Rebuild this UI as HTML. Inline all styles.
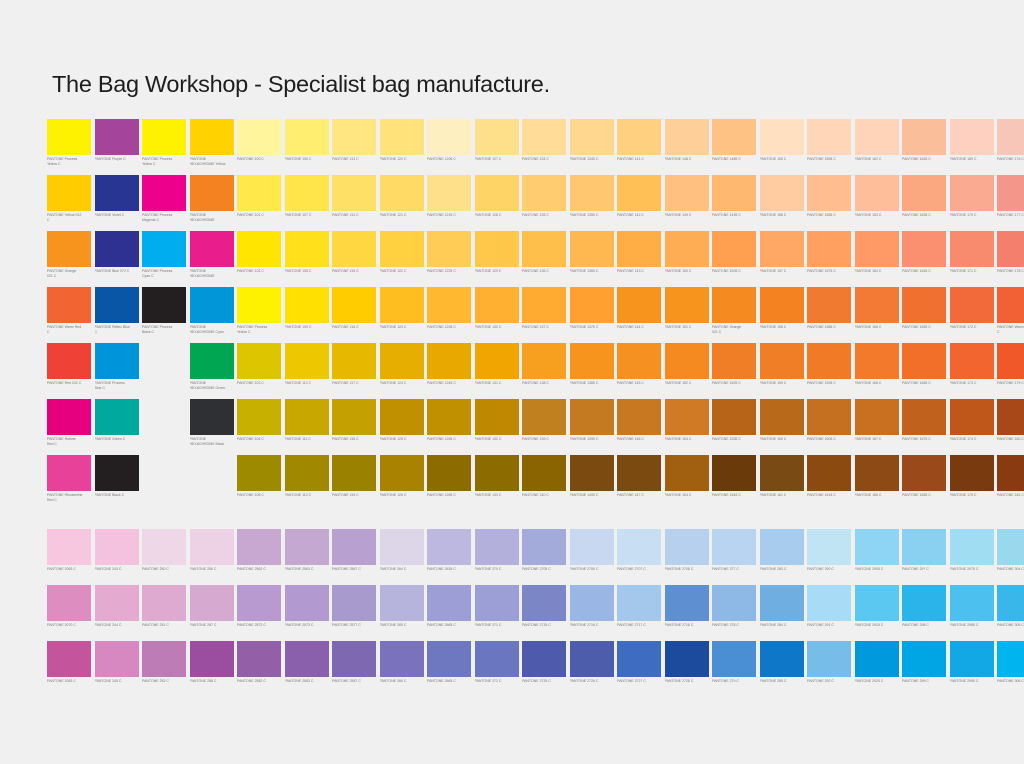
<!DOCTYPE html>
<html><head><meta charset="utf-8"><style>
html,body{margin:0;padding:0;background:#f0f0f0;width:1024px;height:764px;overflow:hidden;font-family:"Liberation Sans",sans-serif}
h1{position:absolute;left:52px;top:71px;margin:0;font-weight:normal;font-size:23.5px;color:#1e1e1e;letter-spacing:-0.3px}
.r{position:absolute;left:47px;display:flex;white-space:nowrap}
.r div{width:44px;margin-right:3.5px;flex:none}
.r i{display:block;height:36px}
.r b{display:block;font-weight:normal;font-size:3.5px;color:#777;margin-top:2px;line-height:4.5px;white-space:normal;width:36px;overflow:hidden;height:9px}
.e i{background:transparent!important}
</style></head><body>
<h1>The Bag Workshop - Specialist bag manufacture.</h1>

<div class="r" style="top:119px">
<div><i style="background:#FFF200"></i><b>PANTONE Process Yellow C</b></div><div><i style="background:#A4449A"></i><b>PANTONE Purple C</b></div><div><i style="background:#FFF200"></i><b>PANTONE Process Yellow C</b></div><div><i style="background:#FFD200"></i><b>PANTONE HEXACHROME Yellow C</b></div><div><i style="background:#FFF59D"></i><b>PANTONE 100 C</b></div><div><i style="background:#FFEE70"></i><b>PANTONE 106 C</b></div><div><i style="background:#FFE680"></i><b>PANTONE 113 C</b></div><div><i style="background:#FFE37A"></i><b>PANTONE 120 C</b></div><div><i style="background:#FDEFC0"></i><b>PANTONE 1205 C</b></div><div><i style="background:#FFE08A"></i><b>PANTONE 127 C</b></div><div><i style="background:#FFDD99"></i><b>PANTONE 134 C</b></div><div><i style="background:#FFD78F"></i><b>PANTONE 1345 C</b></div><div><i style="background:#FFD080"></i><b>PANTONE 141 C</b></div><div><i style="background:#FFCF99"></i><b>PANTONE 148 C</b></div><div><i style="background:#FFC285"></i><b>PANTONE 1485 C</b></div><div><i style="background:#FFE0C0"></i><b>PANTONE 155 C</b></div><div><i style="background:#FFD6B8"></i><b>PANTONE 1555 C</b></div><div><i style="background:#FFD4B8"></i><b>PANTONE 162 C</b></div><div><i style="background:#FBBE9A"></i><b>PANTONE 1625 C</b></div><div><i style="background:#FDD0C0"></i><b>PANTONE 169 C</b></div><div><i style="background:#F8C6B8"></i><b>PANTONE 176 C</b></div>
</div>

<div class="r" style="top:175px">
<div><i style="background:#FFCC00"></i><b>PANTONE Yellow 012 C</b></div><div><i style="background:#283593"></i><b>PANTONE Violet C</b></div><div><i style="background:#EC008C"></i><b>PANTONE Process Magenta C</b></div><div><i style="background:#F58220"></i><b>PANTONE HEXACHROME Orange C</b></div><div><i style="background:#FFE84A"></i><b>PANTONE 101 C</b></div><div><i style="background:#FFE54A"></i><b>PANTONE 107 C</b></div><div><i style="background:#FFE066"></i><b>PANTONE 114 C</b></div><div><i style="background:#FFDB66"></i><b>PANTONE 121 C</b></div><div><i style="background:#FFE08A"></i><b>PANTONE 1215 C</b></div><div><i style="background:#FFD466"></i><b>PANTONE 128 C</b></div><div><i style="background:#FFCD70"></i><b>PANTONE 135 C</b></div><div><i style="background:#FFC870"></i><b>PANTONE 1355 C</b></div><div><i style="background:#FFC055"></i><b>PANTONE 142 C</b></div><div><i style="background:#FFC080"></i><b>PANTONE 149 C</b></div><div><i style="background:#FFB870"></i><b>PANTONE 1495 C</b></div><div><i style="background:#FFCBA0"></i><b>PANTONE 156 C</b></div><div><i style="background:#FFBD90"></i><b>PANTONE 1565 C</b></div><div><i style="background:#FFBE9A"></i><b>PANTONE 163 C</b></div><div><i style="background:#FBA880"></i><b>PANTONE 1635 C</b></div><div><i style="background:#FAAA90"></i><b>PANTONE 170 C</b></div><div><i style="background:#F4978A"></i><b>PANTONE 177 C</b></div>
</div>

<div class="r" style="top:231px">
<div><i style="background:#F7941D"></i><b>PANTONE Orange 021 C</b></div><div><i style="background:#2E3192"></i><b>PANTONE Blue 072 C</b></div><div><i style="background:#00AEEF"></i><b>PANTONE Process Cyan C</b></div><div><i style="background:#E91E8C"></i><b>PANTONE HEXACHROME Magenta C</b></div><div><i style="background:#FFE500"></i><b>PANTONE 102 C</b></div><div><i style="background:#FFE01A"></i><b>PANTONE 108 C</b></div><div><i style="background:#FFD740"></i><b>PANTONE 115 C</b></div><div><i style="background:#FFD040"></i><b>PANTONE 122 C</b></div><div><i style="background:#FFCC55"></i><b>PANTONE 1225 C</b></div><div><i style="background:#FFC84A"></i><b>PANTONE 129 C</b></div><div><i style="background:#FFBF4A"></i><b>PANTONE 136 C</b></div><div><i style="background:#FFB850"></i><b>PANTONE 1365 C</b></div><div><i style="background:#FFAE45"></i><b>PANTONE 143 C</b></div><div><i style="background:#FFAD55"></i><b>PANTONE 150 C</b></div><div><i style="background:#FFA050"></i><b>PANTONE 1505 C</b></div><div><i style="background:#FFA865"></i><b>PANTONE 157 C</b></div><div><i style="background:#FFA060"></i><b>PANTONE 1575 C</b></div><div><i style="background:#FF9966"></i><b>PANTONE 164 C</b></div><div><i style="background:#FA9070"></i><b>PANTONE 1645 C</b></div><div><i style="background:#F88B6D"></i><b>PANTONE 171 C</b></div><div><i style="background:#F47F6C"></i><b>PANTONE 178 C</b></div>
</div>

<div class="r" style="top:287px">
<div><i style="background:#F26532"></i><b>PANTONE Warm Red C</b></div><div><i style="background:#0A56A6"></i><b>PANTONE Reflex Blue C</b></div><div><i style="background:#231F20"></i><b>PANTONE Process Black C</b></div><div><i style="background:#0097D9"></i><b>PANTONE HEXACHROME Cyan C</b></div><div><i style="background:#FFF200"></i><b>PANTONE Process Yellow C</b></div><div><i style="background:#FFE000"></i><b>PANTONE 109 C</b></div><div><i style="background:#FFCC00"></i><b>PANTONE 116 C</b></div><div><i style="background:#FFBE20"></i><b>PANTONE 123 C</b></div><div><i style="background:#FFB830"></i><b>PANTONE 1235 C</b></div><div><i style="background:#FFB030"></i><b>PANTONE 130 C</b></div><div><i style="background:#FFAA30"></i><b>PANTONE 137 C</b></div><div><i style="background:#FFA030"></i><b>PANTONE 1375 C</b></div><div><i style="background:#F7941D"></i><b>PANTONE 144 C</b></div><div><i style="background:#F7941D"></i><b>PANTONE 151 C</b></div><div><i style="background:#F58A20"></i><b>PANTONE Orange 021 C</b></div><div><i style="background:#F58220"></i><b>PANTONE 158 C</b></div><div><i style="background:#F07A30"></i><b>PANTONE 1585 C</b></div><div><i style="background:#F27A35"></i><b>PANTONE 165 C</b></div><div><i style="background:#F07030"></i><b>PANTONE 1655 C</b></div><div><i style="background:#F26A3A"></i><b>PANTONE 172 C</b></div><div><i style="background:#F26035"></i><b>PANTONE Warm Red C</b></div>
</div>

<div class="r" style="top:343px">
<div><i style="background:#EF4136"></i><b>PANTONE Red 032 C</b></div><div><i style="background:#0095DA"></i><b>PANTONE Process Blue C</b></div><div class="e"><i></i></div><div><i style="background:#00A651"></i><b>PANTONE HEXACHROME Green C</b></div><div><i style="background:#DDC500"></i><b>PANTONE 103 C</b></div><div><i style="background:#EDC800"></i><b>PANTONE 110 C</b></div><div><i style="background:#E6B800"></i><b>PANTONE 117 C</b></div><div><i style="background:#E6AE00"></i><b>PANTONE 124 C</b></div><div><i style="background:#E8A800"></i><b>PANTONE 1245 C</b></div><div><i style="background:#F0A500"></i><b>PANTONE 131 C</b></div><div><i style="background:#F7A020"></i><b>PANTONE 138 C</b></div><div><i style="background:#F7941D"></i><b>PANTONE 1385 C</b></div><div><i style="background:#F59120"></i><b>PANTONE 145 C</b></div><div><i style="background:#F58A20"></i><b>PANTONE 152 C</b></div><div><i style="background:#F07E26"></i><b>PANTONE 1525 C</b></div><div><i style="background:#F07E26"></i><b>PANTONE 159 C</b></div><div><i style="background:#F07A26"></i><b>PANTONE 1595 C</b></div><div><i style="background:#F37A2A"></i><b>PANTONE 166 C</b></div><div><i style="background:#F26F2A"></i><b>PANTONE 1665 C</b></div><div><i style="background:#F2652E"></i><b>PANTONE 173 C</b></div><div><i style="background:#F0582A"></i><b>PANTONE 179 C</b></div>
</div>

<div class="r" style="top:399px">
<div><i style="background:#E6007E"></i><b>PANTONE Rubine Red C</b></div><div><i style="background:#00A99D"></i><b>PANTONE Green C</b></div><div class="e"><i></i></div><div><i style="background:#2E3033"></i><b>PANTONE HEXACHROME Black C</b></div><div><i style="background:#C8B000"></i><b>PANTONE 104 C</b></div><div><i style="background:#C8A800"></i><b>PANTONE 111 C</b></div><div><i style="background:#C4A000"></i><b>PANTONE 118 C</b></div><div><i style="background:#C09000"></i><b>PANTONE 125 C</b></div><div><i style="background:#C09000"></i><b>PANTONE 1255 C</b></div><div><i style="background:#BE8800"></i><b>PANTONE 132 C</b></div><div><i style="background:#C08020"></i><b>PANTONE 139 C</b></div><div><i style="background:#C47A20"></i><b>PANTONE 1395 C</b></div><div><i style="background:#C87820"></i><b>PANTONE 146 C</b></div><div><i style="background:#D07A25"></i><b>PANTONE 153 C</b></div><div><i style="background:#B86418"></i><b>PANTONE 1535 C</b></div><div><i style="background:#B86A1A"></i><b>PANTONE 160 C</b></div><div><i style="background:#C47020"></i><b>PANTONE 1605 C</b></div><div><i style="background:#C87020"></i><b>PANTONE 167 C</b></div><div><i style="background:#C0621E"></i><b>PANTONE 1675 C</b></div><div><i style="background:#C0571A"></i><b>PANTONE 174 C</b></div><div><i style="background:#A84818"></i><b>PANTONE 180 C</b></div>
</div>

<div class="r" style="top:455px">
<div><i style="background:#E8419A"></i><b>PANTONE Rhodamine Red C</b></div><div><i style="background:#231F20"></i><b>PANTONE Black C</b></div><div class="e"><i></i></div><div class="e"><i></i></div><div><i style="background:#9E8A00"></i><b>PANTONE 105 C</b></div><div><i style="background:#A08800"></i><b>PANTONE 112 C</b></div><div><i style="background:#9A8200"></i><b>PANTONE 119 C</b></div><div><i style="background:#A88200"></i><b>PANTONE 126 C</b></div><div><i style="background:#8C6C00"></i><b>PANTONE 1265 C</b></div><div><i style="background:#8C6C00"></i><b>PANTONE 133 C</b></div><div><i style="background:#8A6400"></i><b>PANTONE 140 C</b></div><div><i style="background:#7A4A10"></i><b>PANTONE 1405 C</b></div><div><i style="background:#7A4A10"></i><b>PANTONE 147 C</b></div><div><i style="background:#A06010"></i><b>PANTONE 154 C</b></div><div><i style="background:#6A3A0A"></i><b>PANTONE 1545 C</b></div><div><i style="background:#7A4A15"></i><b>PANTONE 161 C</b></div><div><i style="background:#8A4A10"></i><b>PANTONE 1615 C</b></div><div><i style="background:#8E4A15"></i><b>PANTONE 168 C</b></div><div><i style="background:#9A4A1A"></i><b>PANTONE 1685 C</b></div><div><i style="background:#7A3A10"></i><b>PANTONE 175 C</b></div><div><i style="background:#8A3A10"></i><b>PANTONE 181 C</b></div>
</div>

<div class="r" style="top:529px">
<div><i style="background:#F7C7E0"></i><b>PANTONE 2063 C</b></div><div><i style="background:#F4C2DF"></i><b>PANTONE 243 C</b></div><div><i style="background:#EED8E8"></i><b>PANTONE 250 C</b></div><div><i style="background:#EDD2E6"></i><b>PANTONE 256 C</b></div><div><i style="background:#C8A8D0"></i><b>PANTONE 2562 C</b></div><div><i style="background:#C4A8D2"></i><b>PANTONE 2563 C</b></div><div><i style="background:#B8A0D0"></i><b>PANTONE 2567 C</b></div><div><i style="background:#DDD6E8"></i><b>PANTONE 264 C</b></div><div><i style="background:#BDB8E0"></i><b>PANTONE 2635 C</b></div><div><i style="background:#B4B0DC"></i><b>PANTONE 270 C</b></div><div><i style="background:#A3ABDB"></i><b>PANTONE 2705 C</b></div><div><i style="background:#C8D8F0"></i><b>PANTONE 2706 C</b></div><div><i style="background:#C8DEF2"></i><b>PANTONE 2707 C</b></div><div><i style="background:#B6D0EE"></i><b>PANTONE 2708 C</b></div><div><i style="background:#B8D4F0"></i><b>PANTONE 277 C</b></div><div><i style="background:#A8CCEE"></i><b>PANTONE 283 C</b></div><div><i style="background:#C0E4F4"></i><b>PANTONE 290 C</b></div><div><i style="background:#8ED4F4"></i><b>PANTONE 2905 C</b></div><div><i style="background:#8AD0F0"></i><b>PANTONE 297 C</b></div><div><i style="background:#A0DCF2"></i><b>PANTONE 2975 C</b></div><div><i style="background:#9AD8EE"></i><b>PANTONE 304 C</b></div>
</div>

<div class="r" style="top:585px">
<div><i style="background:#DE8DC0"></i><b>PANTONE 2070 C</b></div><div><i style="background:#E4AAD0"></i><b>PANTONE 244 C</b></div><div><i style="background:#DFAAD0"></i><b>PANTONE 251 C</b></div><div><i style="background:#D6AAD0"></i><b>PANTONE 257 C</b></div><div><i style="background:#B89AD0"></i><b>PANTONE 2572 C</b></div><div><i style="background:#B29AD0"></i><b>PANTONE 2573 C</b></div><div><i style="background:#A89ACC"></i><b>PANTONE 2577 C</b></div><div><i style="background:#B6B4DC"></i><b>PANTONE 265 C</b></div><div><i style="background:#9E9ED6"></i><b>PANTONE 2665 C</b></div><div><i style="background:#9C9ED6"></i><b>PANTONE 271 C</b></div><div><i style="background:#7B86C6"></i><b>PANTONE 2715 C</b></div><div><i style="background:#9AB6E4"></i><b>PANTONE 2716 C</b></div><div><i style="background:#A4C8EC"></i><b>PANTONE 2717 C</b></div><div><i style="background:#5E8FD0"></i><b>PANTONE 2718 C</b></div><div><i style="background:#8EB8E6"></i><b>PANTONE 278 C</b></div><div><i style="background:#6FAEE0"></i><b>PANTONE 284 C</b></div><div><i style="background:#A8DCF6"></i><b>PANTONE 291 C</b></div><div><i style="background:#5AC8F0"></i><b>PANTONE 2915 C</b></div><div><i style="background:#2AB4EA"></i><b>PANTONE 298 C</b></div><div><i style="background:#4CC0EE"></i><b>PANTONE 2985 C</b></div><div><i style="background:#38B8EA"></i><b>PANTONE 305 C</b></div>
</div>

<div class="r" style="top:641px">
<div><i style="background:#C4559C"></i><b>PANTONE 2083 C</b></div><div><i style="background:#D888C0"></i><b>PANTONE 245 C</b></div><div><i style="background:#BE7CB6"></i><b>PANTONE 252 C</b></div><div><i style="background:#9B4DA0"></i><b>PANTONE 258 C</b></div><div><i style="background:#9360A8"></i><b>PANTONE 2582 C</b></div><div><i style="background:#8A60AC"></i><b>PANTONE 2583 C</b></div><div><i style="background:#7E68B2"></i><b>PANTONE 2587 C</b></div><div><i style="background:#7A72BC"></i><b>PANTONE 266 C</b></div><div><i style="background:#6E78C0"></i><b>PANTONE 2665 C</b></div><div><i style="background:#6A76C0"></i><b>PANTONE 272 C</b></div><div><i style="background:#4E5AAC"></i><b>PANTONE 2725 C</b></div><div><i style="background:#4E5CAC"></i><b>PANTONE 2726 C</b></div><div><i style="background:#3E6CC0"></i><b>PANTONE 2727 C</b></div><div><i style="background:#1C4A9C"></i><b>PANTONE 2728 C</b></div><div><i style="background:#4A8ED4"></i><b>PANTONE 279 C</b></div><div><i style="background:#0F77C8"></i><b>PANTONE 285 C</b></div><div><i style="background:#76BDEA"></i><b>PANTONE 292 C</b></div><div><i style="background:#0099DD"></i><b>PANTONE 2925 C</b></div><div><i style="background:#00A6E4"></i><b>PANTONE 299 C</b></div><div><i style="background:#12A8E6"></i><b>PANTONE 2995 C</b></div><div><i style="background:#00B4F0"></i><b>PANTONE 306 C</b></div>
</div>
</body></html>
